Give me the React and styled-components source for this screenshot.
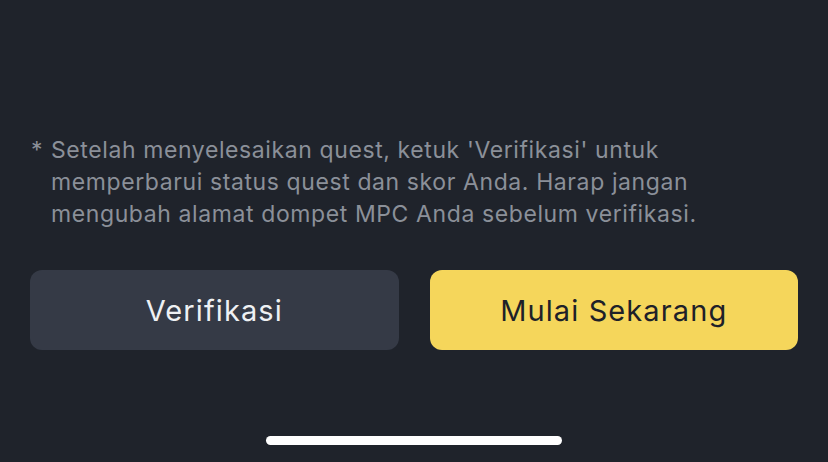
import React from 'react';
import styled, { createGlobalStyle } from 'styled-components';

const Global = createGlobalStyle`
  html, body {
    margin: 0;
    padding: 0;
    background: #1f232b;
  }
`;

const Screen = styled.div`
  width: 828px;
  height: 462px;
  background: #1f232b;
  font-family: Inter, "Noto Sans", sans-serif;
  display: flex;
  flex-direction: column;
  padding: 134px 30px 0 30px;
  box-sizing: border-box;
`;

const Note = styled.div`
  display: flex;
  color: #8b9099;
  font-size: 23px;
  line-height: 32px;
  letter-spacing: 0.6px;
`;

const Star = styled.span`
  width: 20px;
  flex-shrink: 0;
  padding-left: 1px;
`;

const Lines = styled.span`
  white-space: nowrap;
`;

const Actions = styled.div`
  display: flex;
  gap: 31px;
  margin-top: 40px;
`;

const Button = styled.button`
  flex: 1;
  height: 80px;
  border: none;
  border-radius: 12px;
  font-family: inherit;
  font-size: 29px;
  font-weight: 400;
  letter-spacing: 1.1px;
  background: ${p => (p.$primary ? '#f5d65b' : '#353a46')};
  color: ${p => (p.$primary ? '#1e2128' : '#eef0f3')};
`;

const Home = styled.div`
  width: 296px;
  height: 9px;
  border-radius: 5px;
  background: #ffffff;
  margin: 86px auto 0;
`;

export default function App() {
  return (
    <Screen>
      <Global />
      <Note>
        <Star>*</Star>
        <Lines>
          Setelah menyelesaikan quest, ketuk 'Verifikasi' untuk
          <br />
          memperbarui status quest dan skor Anda. Harap jangan
          <br />
          mengubah alamat dompet MPC Anda sebelum verifikasi.
        </Lines>
      </Note>
      <Actions>
        <Button>Verifikasi</Button>
        <Button $primary>Mulai Sekarang</Button>
      </Actions>
      <Home />
    </Screen>
  );
}
